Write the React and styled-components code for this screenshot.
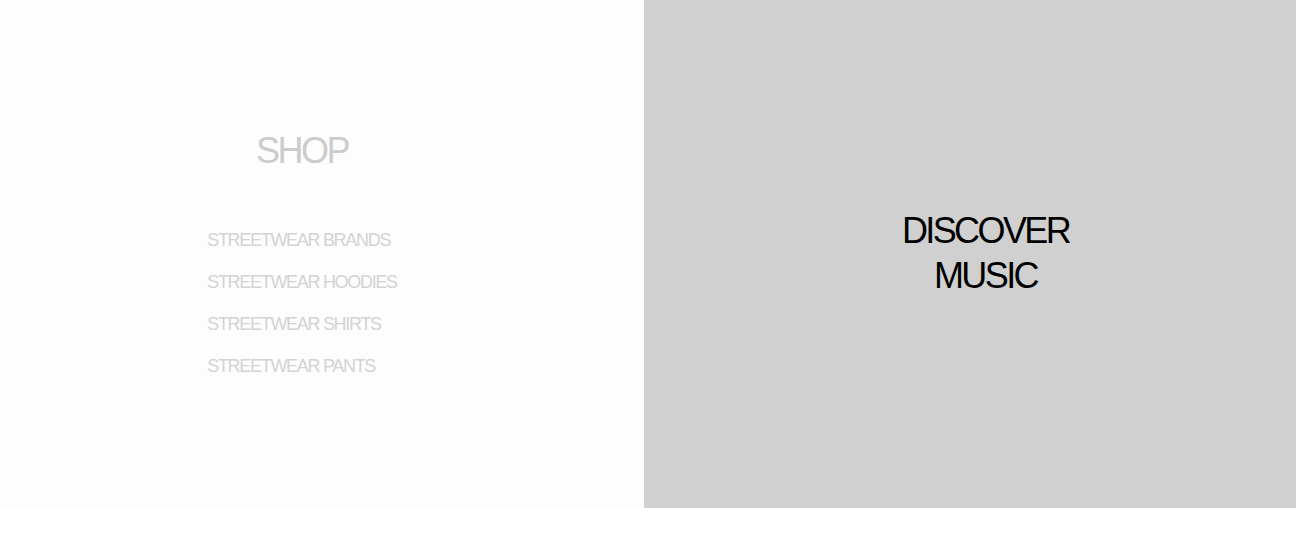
import React from "react";
import styled, { createGlobalStyle } from "styled-components";

const GlobalStyle = createGlobalStyle`
  html, body {
    margin: 0;
    padding: 0;
    background: #ffffff;
  }
  body {
    font-family: "Liberation Sans", Arial, sans-serif;
  }
`;

const Split = styled.main`
  display: flex;
  width: 100%;
  height: 508px;
`;

const ShopPanel = styled.section`
  flex: 0 0 644px;
  background: #fdfdfd;
  display: flex;
  flex-direction: column;
  align-items: center;
  padding: 133px 40px 0 0;
  box-sizing: border-box;
`;

const ShopTitle = styled.h2`
  margin: 0;
  font-size: 36px;
  font-weight: 400;
  line-height: 36px;
  letter-spacing: -2.5px;
  color: #cccccc;
`;

const LinkList = styled.ul`
  list-style: none;
  margin: 50px 0 0;
  padding: 0;
  display: flex;
  flex-direction: column;
  align-items: flex-start;
`;

const LinkItem = styled.li`
  font-size: 18px;
  line-height: 42px;
  letter-spacing: -1.3px;
  color: #d3d3d3;
  white-space: nowrap;
`;

const MusicPanel = styled.section`
  flex: 1;
  background: #d0d0d0;
  display: flex;
  align-items: center;
  justify-content: center;
  padding: 0 0 2px 31px;
  box-sizing: border-box;
`;

const MusicTitle = styled.h2`
  margin: 0;
  font-size: 36px;
  font-weight: 400;
  line-height: 45px;
  letter-spacing: -2.6px;
  text-align: center;
  color: #000000;
`;

const links = [
  "STREETWEAR BRANDS",
  "STREETWEAR HOODIES",
  "STREETWEAR SHIRTS",
  "STREETWEAR PANTS",
];

export default function App() {
  return (
    <>
      <GlobalStyle />
      <Split>
        <ShopPanel>
          <ShopTitle>SHOP</ShopTitle>
          <LinkList>
            {links.map((l) => (
              <LinkItem key={l}>{l}</LinkItem>
            ))}
          </LinkList>
        </ShopPanel>
        <MusicPanel>
          <MusicTitle>
            DISCOVER
            <br />
            MUSIC
          </MusicTitle>
        </MusicPanel>
      </Split>
    </>
  );
}
